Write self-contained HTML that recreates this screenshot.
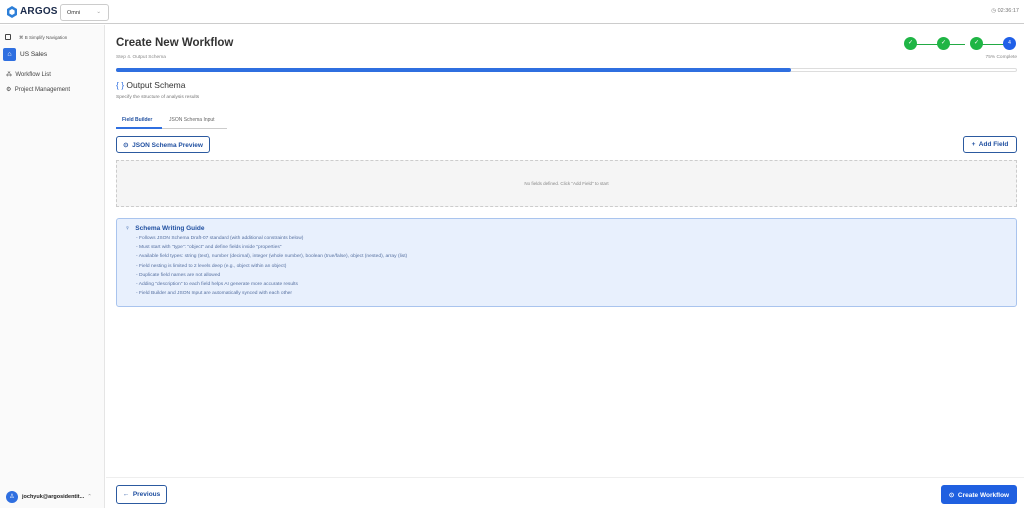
<!DOCTYPE html><html><head><style>
*{box-sizing:border-box;margin:0;padding:0}
body{width:1024px;height:508px;overflow:hidden;font-family:"Liberation Sans",sans-serif;background:#fff;color:#333;position:relative}
.a{position:absolute}
.hdr{left:0;top:0;width:1024px;height:24px;border-bottom:1px solid #ccc;background:#fff}
.side{left:0;top:25px;width:105px;height:483px;background:#fafafa;border-right:1px solid #e5e5e5}
.btn{border:1px solid #2c5aa0;border-radius:3px;color:#1f4fa0;font-weight:bold;font-size:6.5px;display:flex;align-items:center;justify-content:center;background:#fff}
.g li{list-style:none;font-size:4.9px;color:#5670a0;height:9.2px;line-height:9.2px}
</style></head><body>
<div class="a hdr"></div>
<svg class="a" style="left:6px;top:6px" width="12" height="12" viewBox="0 0 12 12"><path d="M6 0L11 3V9L6 12L1 9V3Z" fill="#2d7fd8"/><path d="M6 3L8.6 4.5V7.5L6 9L3.4 7.5V4.5Z" fill="#fff"/></svg>
<div class="a" style="left:20px;top:6px;font-size:10px;font-weight:bold;color:#1a2a4a;letter-spacing:.2px">ARGOS</div>
<div class="a" style="left:60px;top:4px;width:49px;height:17px;border:1px solid #ccc;border-radius:3px;font-size:5.5px;padding:5px 6px">Omni<span style="position:absolute;right:7px;top:4px;color:#999">⌄</span></div>
<div class="a" style="right:5px;top:8px;font-size:5.5px;color:#777">◷ 02:36:17</div>
<div class="a side"></div>
<div class="a" style="left:5px;top:34px;width:6px;height:6px;border:1px solid #444;border-radius:1px"></div>
<div class="a" style="left:19px;top:35px;font-size:4.5px;color:#555">⌘ B Simplify Navigation</div>
<div class="a" style="left:3px;top:48px;width:13px;height:13px;background:#2f6fe0;border-radius:2px;color:#fff;font-size:7px;text-align:center;line-height:13px">⌂</div>
<div class="a" style="left:20px;top:51px;font-size:6.5px;color:#333">US Sales</div>
<div class="a" style="left:6px;top:71px;font-size:6px;color:#444">⁂&nbsp; Workflow List</div>
<div class="a" style="left:6px;top:86px;font-size:6px;color:#444">⚙&nbsp; Project Management</div>
<div class="a" style="left:6px;top:491px;width:12px;height:12px;border-radius:50%;background:#2f6fe0;color:#fff;font-size:6px;text-align:center;line-height:12px">♙</div>
<div class="a" style="left:22px;top:494px;font-size:5.5px;color:#222;font-weight:bold">jochyuk@argosidentit... <span style="color:#888;font-weight:normal">&nbsp;⌃</span></div>
<div class="a" style="left:116px;top:37px;font-size:11.5px;font-weight:bold;color:#333">Create New Workflow</div>
<div class="a" style="left:116px;top:55px;font-size:4.8px;color:#888">Step 4. Output Schema</div>
<div class="a" style="left:116px;top:68px;width:901px;height:4px;border:1px solid #ddd;border-radius:2px"></div>
<div class="a" style="left:116px;top:68px;width:675px;height:4px;background:#2f6fe0;border-radius:2px"></div>
<div class="a" style="left:911px;top:43.5px;width:54px;height:1px;background:#22aa44"></div>
<div class="a" style="left:977px;top:43.5px;width:33px;height:1px;background:#22aa44"></div>
<div class="a" style="left:904px;top:37px;width:13px;height:13px;border-radius:50%;background:#1fb545;color:#fff;font-size:6px;text-align:center;line-height:13px">✓</div>
<div class="a" style="left:937px;top:37px;width:13px;height:13px;border-radius:50%;background:#1fb545;color:#fff;font-size:6px;text-align:center;line-height:13px">✓</div>
<div class="a" style="left:970px;top:37px;width:13px;height:13px;border-radius:50%;background:#1fb545;color:#fff;font-size:6px;text-align:center;line-height:13px">✓</div>
<div class="a" style="left:1003px;top:37px;width:13px;height:13px;border-radius:50%;background:#2060e8;color:#fff;font-size:5px;text-align:center;line-height:13px">4</div>
<div class="a" style="right:7px;top:55px;font-size:4.8px;color:#888">75% Complete</div>
<div class="a" style="left:116px;top:80px;font-size:8.5px;color:#333"><span style="color:#2f6fe0">{ }</span> Output Schema</div>
<div class="a" style="left:116px;top:95px;font-size:4.8px;color:#777">Specify the structure of analysis results</div>
<div class="a" style="left:116px;top:128px;width:111px;height:1px;background:#ccc"></div>
<div class="a" style="left:116px;top:127px;width:46px;height:2px;background:#2f6fe0"></div>
<div class="a" style="left:122px;top:117px;font-size:5px;color:#1f4fa0;font-weight:bold">Field Builder</div>
<div class="a" style="left:169px;top:117px;font-size:5px;color:#666">JSON Schema Input</div>
<div class="a btn" style="left:116px;top:136px;width:94px;height:17px">⊙&nbsp; JSON Schema Preview</div>
<div class="a btn" style="left:963px;top:136px;width:54px;height:17px">+&nbsp; Add Field</div>
<div class="a" style="left:116px;top:160px;width:901px;height:47px;border:1px dashed #ccc;background:#f5f5f5;font-size:4.5px;color:#888;text-align:center;line-height:46px">No fields defined. Click "Add Field" to start</div>
<div class="a" style="left:116px;top:218px;width:901px;height:89px;border:1px solid #a9c4ee;border-radius:3px;background:#e8f0fd;padding:6px 8px">
<div style="font-size:6.5px;font-weight:bold;color:#1f4fa0">♀&nbsp;&nbsp; Schema Writing Guide</div>
<ul class="g" style="margin:2px 0 0 11px">
<li>- Follows JSON Schema Draft-07 standard (with additional constraints below)</li>
<li>- Must start with "type": "object" and define fields inside "properties"</li>
<li>- Available field types: string (text), number (decimal), integer (whole number), boolean (true/false), object (nested), array (list)</li>
<li>- Field nesting is limited to 2 levels deep (e.g., object within an object)</li>
<li>- Duplicate field names are not allowed</li>
<li>- Adding "description" to each field helps AI generate more accurate results</li>
<li>- Field Builder and JSON Input are automatically synced with each other</li></ul></div>
<div class="a" style="left:106px;top:477px;width:918px;height:31px;border-top:1px solid #eee;background:#fff"></div>
<div class="a btn" style="left:116px;top:485px;width:51px;height:19px">←&nbsp; Previous</div>
<div class="a btn" style="left:941px;top:485px;width:76px;height:19px;background:#2060e0;color:#fff;border-color:#2060e0">⊙&nbsp; Create Workflow</div>
</body></html>
